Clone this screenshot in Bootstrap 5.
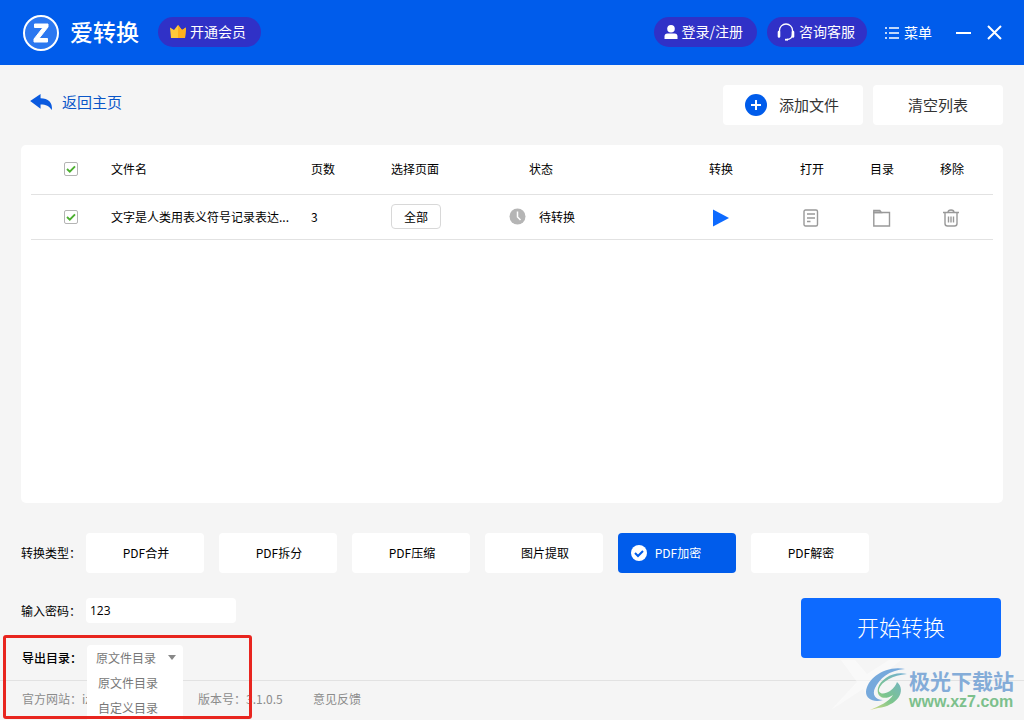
<!DOCTYPE html>
<html lang="zh-CN">
<head>
<meta charset="utf-8">
<meta name="viewport" content="width=device-width, initial-scale=1">
<title>爱转换</title>
<link rel="stylesheet" href="https://cdn.jsdelivr.net/npm/bootstrap@5.3.0/dist/css/bootstrap.min.css">
<style>
  :root { --blue: #005ceb; --pill: #3031c7; --line: #e2e2e2; }
  body { font-family: "Noto Sans CJK SC", sans-serif; font-size: 12px; line-height: 18px; color: #000; background: #f5f5f5; }
  button, input, select { font-family: inherit; }
  svg { display: block; flex: none; }
  .app { height: 100vh; min-height: 600px; overflow: hidden; }
  .topbar { height: 65px; background: var(--blue); padding: 0 22px 0 23px; }
  .brand-name { font-size: 23px; line-height: 32px; font-weight: 500; margin-left: 11px; padding-bottom: 4px; }
  .pill { height: 30px; border: 0; border-radius: 15px; background: var(--pill); color: #fff; font-size: 14px; line-height: 20px; padding: 0 12px 0 10px; margin-bottom: 2px; }
  .pill span, .menu-btn span { padding-bottom: 2px; }
  .pill-vip { margin-left: 19px; padding: 0 15px 0 12px; }
  .pill-login { padding: 0 14px 0 10px; }
  .pill-help { margin-left: 10px; }
  .bare { border: 0; background: none; padding: 0; color: inherit; }
  .menu-btn { font-size: 14px; line-height: 20px; color: #fff; margin-left: 18px; }
  .win-min { margin-left: 24px; }
  .actions { padding: 20px 21px 20px 30px; gap: 10px; }
  .back { color: #0a56c8; font-size: 15px; line-height: 20px; gap: 9px; padding-bottom: 6px; }
  .tool { height: 40px; border: 0; border-radius: 4px; background: #fff; color: #333; font-size: 15px; line-height: 20px; padding: 0; }
  .tool-add { width: 140px; gap: 12px; padding-right: 2px; }
  .tool-clear { width: 130px; }
  .panel { margin: 0 21px; padding: 0 10px; border-radius: 5px; background: #fff; }
  .files { table-layout: fixed; width: 100%; margin: 0; }
  .files th, .files td { padding: 0; font-weight: 400; border-bottom: 1px solid var(--line); vertical-align: middle; }
  .files th { height: 49px; }
  .files td { height: 45px; }
  .files .state-head { padding-left: 20px; }
  .state { gap: 13px; }
  .files .play-cell { padding: 1px 0 0 4px; }
  .files .ico-cell { padding: 1px 0 0 3px; }
  .files .bare svg { display: inline-block; vertical-align: middle; }
  .tick { appearance: none; display: block; width: 14px; height: 14px; margin: 0 0 0 33px; border: 1px solid #b4b4b4; border-radius: 2px;
    background: #fff url("data:image/svg+xml,%3Csvg xmlns='http://www.w3.org/2000/svg' viewBox='0 0 12 12'%3E%3Cpath d='M2 6l2.8 2.700L10 3.300' fill='none' stroke='%234caf2f' stroke-width='1.900'/%3E%3C/svg%3E"); }
  .pages-btn { width: 50px; height: 25px; border: 1px solid #d8d8d8; border-radius: 4px; background: #fff; padding: 0; color: #000; }
  .form-area { padding: 30px 23px 10px 21px; }
  .kinds { gap: 15px; margin-bottom: 25px; }
  .kind { flex: 0 1 118px; height: 40px; border: 0; border-radius: 4px; background: #fff; padding: 0 0 1px 2px; color: #000; }
  .kind.active { background: var(--blue); color: #fff; padding-right: 24px; gap: 8px; }
  .field-label { flex: none; width: 65px; }
  .kinds .field-label { margin-right: -15px; }
  .pw { width: 150px; height: 25px; border: 0; border-radius: 4px; padding: 0 4px; background: #fff; font-family: "Open Sans", sans-serif; color: #000; }
  .start { width: 200px; height: 60px; border: 0; border-radius: 4px; background: #0d6aff; color: #fff; font-size: 22px; line-height: 32px; font-weight: 300; padding: 0 0 4px; }
  .out-row { margin-top: 22px; padding-left: 1px; }
  .dir { display: block; width: 96px; height: 25px; border: 0; border-radius: 4px 4px 0 0; background: #fff; color: #777; padding: 0 9px; appearance: none; }
  .dir-wrap::after { content: ""; position: absolute; right: 7px; top: 10px; border: 4px solid transparent; border-top: 5px solid #888; border-bottom: 0; pointer-events: none; }
  .dir-menu { position: absolute; left: 0; top: 25px; width: 96px; z-index: 2; background: #fff; color: #777; }
  .dir-menu button { display: block; width: 100%; height: 25px; padding: 0 11px; text-align: left; }
  .callout { position: absolute; left: -18px; top: -10px; width: 249px; height: 84px; border: 3px solid #e8251f; border-radius: 3px; z-index: 3; pointer-events: none; }
  .foot { height: 40px; flex: none; border-top: 1px solid var(--line); color: #8c8c8c; padding: 0 22px 3px; }
  .foot a { color: inherit; text-decoration: none; }
  .site { width: 176px; }
  .version { width: 115px; }
  .stamp { position: absolute; right: 10px; bottom: 6px; z-index: 1; }
  .stamp-text { padding-top: 5px; }
  .stamp-name { font-size: 21px; line-height: 25px; font-weight: 700; color: #84acd8; }
  .stamp-url { font-family: "Liberation Sans", sans-serif; font-size: 16px; line-height: 18px; font-weight: 700; color: #7cc08c; }
</style>
</head>
<body>
<div class="app d-flex flex-column position-relative">
  <header class="topbar d-flex flex-shrink-0 align-items-center text-white">
    <svg width="36" height="36" viewBox="0 0 36 36" aria-hidden="true"><circle cx="18" cy="18" r="17" fill="#2c78f0" stroke="#fff" stroke-width="2"/><path d="M11.500 9H25V12L16 23.500H24.500V27H11V24L20 12.500H11.500Z" fill="#fff" stroke="#fff" stroke-linejoin="round"/></svg>
    <span class="brand-name">爱转换</span>
    <button class="pill pill-vip d-flex align-items-center gap-1">
      <svg width="16" height="14" viewBox="0 0 16 14"><path d="M0 2.500l4 2.500 4-5 4 5 4-2.500-1 10.500h-14z" fill="#ffca3a"/><path d="M8 0l4 5 4-2.500-1 10.500H8z" fill="#ffb01c"/></svg>
      <span>开通会员</span>
    </button>
    <button class="pill pill-login d-flex align-items-center ms-auto gap-1">
      <svg width="14" height="14" viewBox="0 0 14 14" fill="#fff"><circle cx="7" cy="3.800" r="3.800"/><path d="M.5 14v-2.500q0-3 3-3h7q3 0 3 3v2.500z"/></svg>
      <span>登录/注册</span>
    </button>
    <button class="pill pill-help d-flex align-items-center gap-1">
      <svg width="18" height="18" viewBox="0 0 18 18" fill="none" stroke="#fff"><path d="M2.500 9V7.500a6.500 6.500 0 0 1 13 0V11q0 5-5.500 5.500" stroke-width="1.300"/><path d="M2 9v4.500M16 9v4.500" stroke-width="2.600" stroke-linecap="round"/><path d="M8 16.700h3" stroke-width="1.800"/></svg>
      <span>咨询客服</span>
    </button>
    <button class="menu-btn bare d-flex align-items-center gap-1">
      <svg width="15" height="14" viewBox="0 0 15 14" stroke="#fff" stroke-width="1.600"><path d="M0 2h2M4 2H14M0 7h2M4 7H14M0 12h2M4 12H14"/></svg>
      <span>菜单</span>
    </button>
    <button class="bare win-min" aria-label="最小化"><svg width="15" height="15" viewBox="0 0 15 15"><path d="M0 8h15" stroke="#fff" stroke-width="2"/></svg></button>
    <button class="bare ms-3" aria-label="关闭"><svg width="15" height="15" viewBox="0 0 15 15"><path d="M1 1l13 13M14 1L1 14" stroke="#fff" stroke-width="2"/></svg></button>
  </header>

  <div class="actions d-flex align-items-center">
    <a href="#" class="back d-flex align-items-center text-decoration-none me-auto">
      <svg width="23" height="17" viewBox="0 0 24 18"><path d="M0 7.500L11 0v4.500C19 4.500 24 9 23 17 20 12.500 17 11 11 11v4.500z" fill="#0a5adf"/></svg>
      返回主页
    </a>
    <button class="tool tool-add d-flex align-items-center justify-content-center">
      <svg width="22" height="22" viewBox="0 0 22 22"><circle cx="11" cy="11" r="11" fill="#005ceb"/><path d="M11 6v10M6 11h10" stroke="#fff" stroke-width="2"/></svg>
      <span>添加文件</span>
    </button>
    <button class="tool tool-clear">清空列表</button>
  </div>

  <main class="panel flex-grow-1">
    <table class="files">
      <colgroup><col style="width:80px"><col style="width:200px"><col style="width:80px"><col style="width:118px"><col><col style="width:91px"><col style="width:70px"><col style="width:70px"><col style="width:53px"></colgroup>
      <thead><tr>
        <th><input type="checkbox" class="tick" checked aria-label="全选"></th><th>文件名</th><th>页数</th><th>选择页面</th><th class="state-head">状态</th><th>转换</th><th>打开</th><th>目录</th><th>移除</th>
      </tr></thead>
      <tbody><tr>
        <td><input type="checkbox" class="tick" checked aria-label="选择文件"></td><td>文字是人类用表义符号记录表达...</td><td>3</td>
        <td><button class="pages-btn">全部</button></td>
        <td><div class="state d-flex align-items-center"><svg width="17" height="17" viewBox="0 0 17 17"><circle cx="8.500" cy="8.500" r="8" fill="#b5b5b5"/><path d="M8.500 3.500v5.500l3 3" fill="none" stroke="#fff" stroke-width="1.500"/></svg><span>待转换</span></div></td>
        <td class="play-cell"><button class="bare" aria-label="转换"><svg width="16" height="18" viewBox="0 0 16 18"><path d="M0 0.500L16 9 0 17.500z" fill="#0d6aff"/></svg></button></td>
        <td class="ico-cell"><button class="bare" aria-label="打开"><svg width="16" height="18" viewBox="0 0 16 18" fill="none" stroke="#999" stroke-width="1.400"><rect x="1" y="1" width="13.500" height="16" rx="1.500"/><path d="M4 5h8M4 9h8M4 12.500h3.500"/></svg></button></td>
        <td class="ico-cell"><button class="bare" aria-label="目录"><svg width="18" height="18" viewBox="0 0 18 18" fill="none" stroke="#999" stroke-width="1.400"><path d="M.8 3.500V17h15.700V3.500z"/><path d="M.8 3.500V1.500h6l1.500 2z" fill="#ccc"/></svg></button></td>
        <td class="ico-cell"><button class="bare" aria-label="移除"><svg width="16" height="18" viewBox="0 0 16 18" fill="none" stroke="#999" stroke-width="1.400"><path d="M0 3.500h16M5 3.500Q5 1 8 1t3 2.500M2 4v10.500q0 2.500 2.500 2.500h7q2.500 0 2.500-2.500V4M5.500 7.500v6M8 7.500v6M10.500 7.500v6"/></svg></button></td>
      </tr></tbody>
    </table>
  </main>

  <section class="form-area">
    <div class="kinds d-flex align-items-center">
      <span class="field-label">转换类型：</span>
      <button class="kind">PDF合并</button>
      <button class="kind">PDF拆分</button>
      <button class="kind">PDF压缩</button>
      <button class="kind">图片提取</button>
      <button class="kind active d-flex align-items-center justify-content-center"><svg width="16" height="16" viewBox="0 0 16 16"><circle cx="8" cy="8" r="8" fill="#fff"/><path d="M4 8l3 3 5-5" fill="none" stroke="#005ceb" stroke-width="2"/></svg>PDF加密</button>
      <button class="kind">PDF解密</button>
    </div>
    <div class="d-flex justify-content-between align-items-start">
      <div>
        <div class="d-flex align-items-center">
          <label class="field-label" for="pw">输入密码：</label>
          <input class="pw" id="pw" type="text" value="123">
        </div>
        <div class="out-row d-flex align-items-center position-relative">
          <label class="field-label fw-medium" for="dir">导出目录：</label>
          <div class="dir-wrap position-relative">
            <select class="dir" id="dir"><option>原文件目录</option><option>自定义目录</option></select>
            <div class="dir-menu"><button class="bare">原文件目录</button><button class="bare">自定义目录</button></div>
          </div>
          <div class="callout"></div>
        </div>
      </div>
      <button class="start">开始转换</button>
    </div>
  </section>

  <footer class="foot d-flex align-items-center">
    <span class="site">官方网站：<a href="#">iz</a></span>
    <span class="version">版本号：3.1.0.5</span>
    <a href="#">意见反馈</a>
  </footer>

  <div class="stamp d-flex align-items-center">
    <svg width="78" height="54" viewBox="0 0 78 54" aria-hidden="true">
      <defs><linearGradient id="leaf" x1="0" y1="1" x2="1" y2="0"><stop offset="0" stop-color="#d9dc82"/><stop offset=".4" stop-color="#7cc58d"/><stop offset="1" stop-color="#72aed6"/></linearGradient></defs>
      <path d="M10 0H24L36 14 58 0H70L40 24 46 40H38L32 29 0 50 26 22Z" fill="#fff" opacity=".45"/>
      <path d="M74 9C55 5 36 18 35 32 35 39 43 43 52 40 44 40 41 34 44 28 48 19 58 10 74 9Z" fill="#76a9dc"/>
      <path d="M76 14C62 15 50 22 48 29 47 34 53 35 59 31 63 28 65 25 66 22 76 31 66 46 47 48L39 50C48 46 58 42 62 35 53 41 45 37 47 28 50 19 62 11 76 14Z" fill="url(#leaf)"/>
    </svg>
    <div class="stamp-text"><div class="stamp-name">极光下载站</div><div class="stamp-url">www.xz7.com</div></div>
  </div>
</div>
<script src="https://cdn.jsdelivr.net/npm/bootstrap@5.3.0/dist/js/bootstrap.bundle.min.js"></script>
</body>
</html>
